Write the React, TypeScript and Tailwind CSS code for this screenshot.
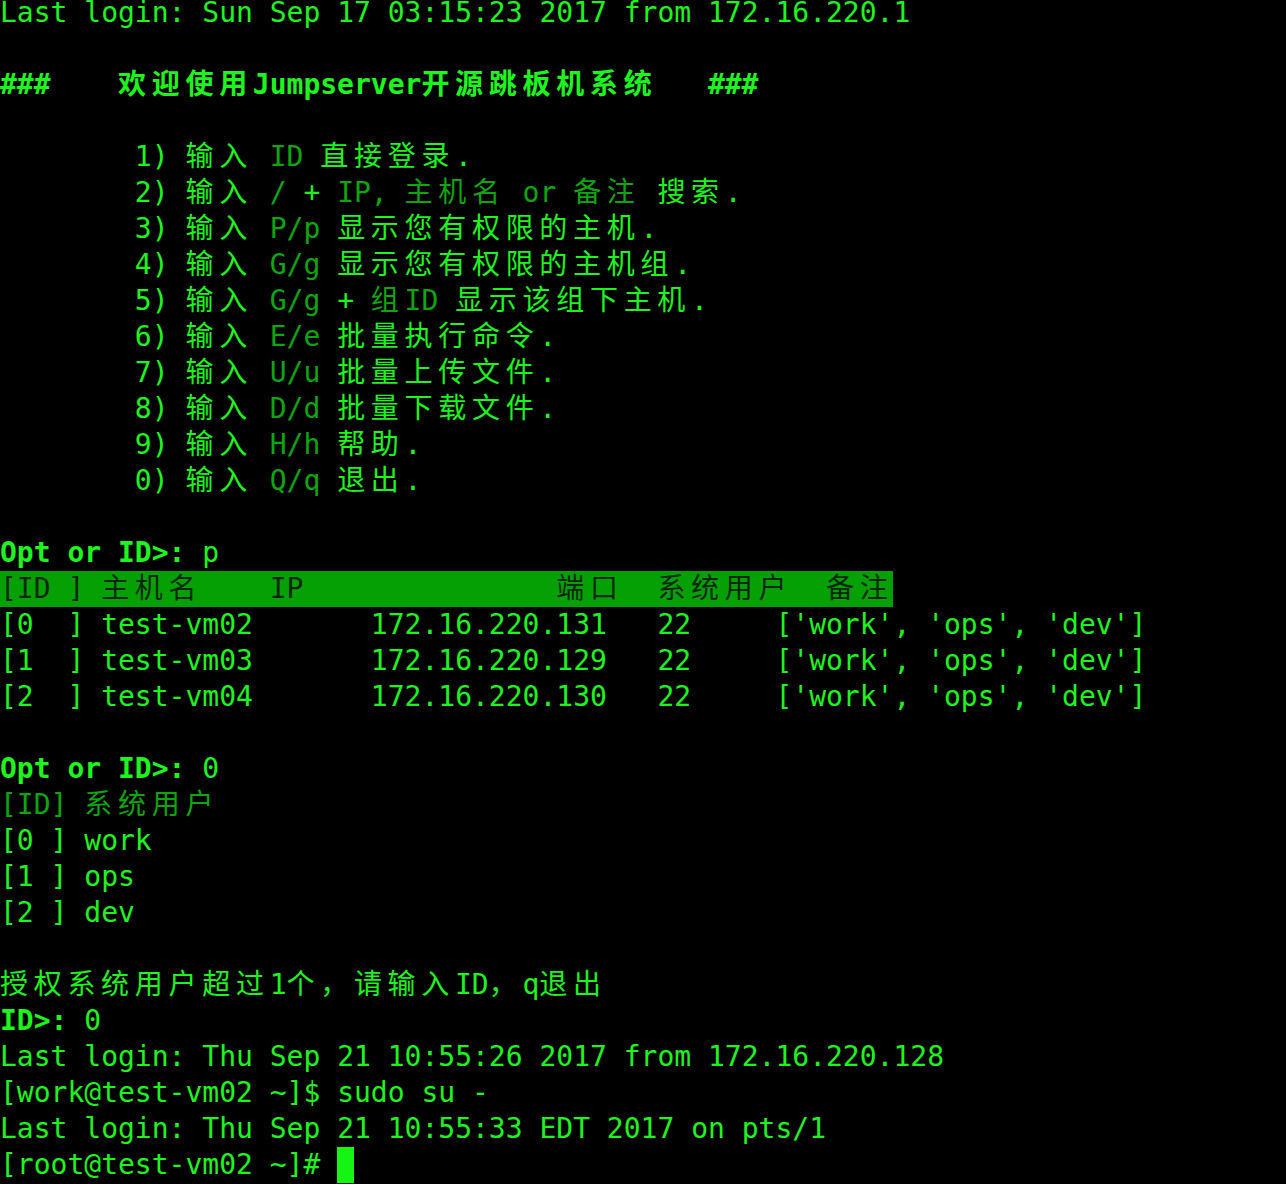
import React from "react"

// terminal palette
type Tone = "b" | "d"
type Seg = { t: string; tone?: Tone; bold?: boolean }

const WIDE = /[\u2e80-\u9fff\u3000-\u303f\uff00-\uffef]/

const TONE: Record<Tone, string> = {
  b: "text-[#1ef51e]",
  d: "text-[#0ea60e]",
}

function Cells({ text }: { text: string }) {
  const out: React.ReactNode[] = []
  let buf = ""
  let k = 0
  for (const ch of Array.from(text)) {
    if (WIDE.test(ch)) {
      if (buf) out.push(<span key={k++}>{buf}</span>)
      buf = ""
      out.push(
        <span key={k++} className="inline-block w-[2ch]">
          {ch}
        </span>
      )
    } else {
      buf += ch
    }
  }
  if (buf) out.push(<span key={k++}>{buf}</span>)
  return <>{out}</>
}

const b = (t: string): Seg => ({ t })
const d = (t: string): Seg => ({ t, tone: "d" })
const B = (t: string): Seg => ({ t, bold: true })

function Line({ segs }: { segs: Seg[] }) {
  return (
    <div className="h-9 whitespace-pre">
      {segs.map((s, i) => (
        <span key={i} className={`${TONE[s.tone ?? "b"]} ${s.bold ? "font-bold" : "font-normal"}`}>
          <Cells text={s.t} />
        </span>
      ))}
    </div>
  )
}

const IND = "        "

const menu: [string, Seg[]][] = [
  ["1", [d("ID"), b(" 直接登录.")]],
  ["2", [d("/"), b(" + "), d("IP, 主机名 or 备注"), b(" 搜索.")]],
  ["3", [d("P/p"), b(" 显示您有权限的主机.")]],
  ["4", [d("G/g"), b(" 显示您有权限的主机组.")]],
  ["5", [d("G/g"), b(" + "), d("组ID"), b(" 显示该组下主机.")]],
  ["6", [d("E/e"), b(" 批量执行命令.")]],
  ["7", [d("U/u"), b(" 批量上传文件.")]],
  ["8", [d("D/d"), b(" 批量下载文件.")]],
  ["9", [d("H/h"), b(" 帮助.")]],
  ["0", [d("Q/q"), b(" 退出.")]],
]

const hosts = [
  ["0", "test-vm02", "172.16.220.131"],
  ["1", "test-vm03", "172.16.220.129"],
  ["2", "test-vm04", "172.16.220.130"],
]

export default function App() {
  return (
    <div className="min-h-[1184px] w-full overflow-hidden bg-black">
      <div className="mt-[-5px] font-['DejaVu_Sans_Mono','Noto_Sans_CJK_SC',monospace] text-[28px] leading-9">
        <Line segs={[b("Last login: Sun Sep 17 03:15:23 2017 from 172.16.220.1")]} />
        <Line segs={[]} />
        <Line segs={[B("###    欢迎使用Jumpserver开源跳板机系统   ###")]} />
        <Line segs={[]} />
        {menu.map(([n, segs]) => (
          <Line key={n} segs={[b(`${IND}${n}) 输入 `), ...segs]} />
        ))}
        <Line segs={[]} />
        <Line segs={[B("Opt or ID>:"), b(" p")]} />
        <div className="h-9 whitespace-pre">
          <span className="inline-block h-9 bg-[#04a004] text-[#0c260c]">
            <Cells text="[ID ] 主机名    IP               端口  系统用户  备注" />
          </span>
        </div>
        {hosts.map(([id, name, ip]) => (
          <Line key={id} segs={[b(`[${id}  ] ${name}       ${ip}   22     ['work', 'ops', 'dev']`)]} />
        ))}
        <Line segs={[]} />
        <Line segs={[B("Opt or ID>:"), b(" 0")]} />
        <Line segs={[d("[ID] 系统用户")]} />
        <Line segs={[b("[0 ] work")]} />
        <Line segs={[b("[1 ] ops")]} />
        <Line segs={[b("[2 ] dev")]} />
        <Line segs={[]} />
        <Line segs={[b("授权系统用户超过1个，请输入ID，q退出")]} />
        <Line segs={[B("ID>:"), b(" 0")]} />
        <Line segs={[b("Last login: Thu Sep 21 10:55:26 2017 from 172.16.220.128")]} />
        <Line segs={[b("[work@test-vm02 ~]$ sudo su -")]} />
        <Line segs={[b("Last login: Thu Sep 21 10:55:33 EDT 2017 on pts/1")]} />
        <div className="h-9 whitespace-pre text-[#1ef51e]">
          <span>[root@test-vm02 ~]# </span>
          <span className="inline-block h-9 w-[1ch] align-top bg-[#14f514]" />
        </div>
      </div>
    </div>
  )
}
